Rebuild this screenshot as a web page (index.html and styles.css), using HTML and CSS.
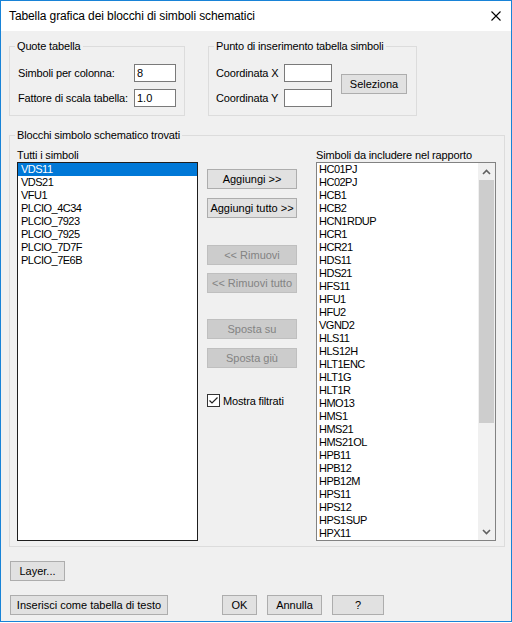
FILE: index.html
```html
<!DOCTYPE html>
<html lang="it">
<head>
	<meta charset="UTF-8">
	<title>Tabella grafica dei blocchi di simboli schematici</title>
	<link rel="stylesheet" href="styles.css">
</head>
<body>
	<div class="win">
		<div class="titlebar">
			<span class="title">Tabella grafica dei blocchi di simboli schematici</span>
			<svg class="close" width="10" height="10" viewBox="0 0 10 10"><path d="M0.5 0.5L9.5 9.5M9.5 0.5L0.5 9.5" stroke="#000" stroke-width="1.1" fill="none"/></svg>
		</div>
		<div class="main">
			<div class="toprow">
				<fieldset class="grp grp_quote">
					<legend>Quote tabella</legend>
					<div class="inner">
						<div class="frow"><label>Simboli per colonna:</label><input class="tb" value="8"></div>
						<div class="frow"><label>Fattore di scala tabella:</label><input class="tb" value="1.0"></div>
					</div>
				</fieldset>
				<fieldset class="grp grp_punto">
					<legend>Punto di inserimento tabella simboli</legend>
					<div class="inner">
						<div class="coords">
							<div class="frow"><label>Coordinata X</label><input class="tb"></div>
							<div class="frow"><label>Coordinata Y</label><input class="tb"></div>
						</div>
						<button class="btn sel">Seleziona</button>
					</div>
				</fieldset>
			</div>

			<fieldset class="grp grp_blocchi">
				<legend>Blocchi simbolo schematico trovati</legend>
				<div class="inner">
					<div class="col_l">
						<div class="cap">Tutti i simboli</div>
						<div class="lb lb_focus">
							<ul class="items">
								<li class="on">VDS11</li>
								<li>VDS21</li>
								<li>VFU1</li>
								<li>PLCIO_4C34</li>
								<li>PLCIO_7923</li>
								<li>PLCIO_7925</li>
								<li>PLCIO_7D7F</li>
								<li>PLCIO_7E6B</li>
							</ul>
						</div>
					</div>
					<div class="col_m">
						<button class="btn mid">Aggiungi &gt;&gt;</button>
						<button class="btn mid m9">Aggiungi tutto &gt;&gt;</button>
						<button class="btn mid m27" disabled>&lt;&lt; Rimuovi</button>
						<button class="btn mid m8" disabled>&lt;&lt; Rimuovi tutto</button>
						<button class="btn mid m26" disabled>Sposta su</button>
						<button class="btn mid m9" disabled>Sposta giù</button>
						<div class="chk">
							<svg width="13" height="13" viewBox="0 0 13 13"><rect x="0.5" y="0.5" width="12" height="12" fill="#fff" stroke="#333"/><path d="M2.5 6.5L5 9L10.5 3.5" stroke="#222" stroke-width="1.2" fill="none"/></svg>
							<span>Mostra filtrati</span>
						</div>
					</div>
					<div class="col_r">
						<div class="cap">Simboli da includere nel rapporto</div>
						<div class="lb">
							<ul class="items">
								<li>HC01PJ</li>
								<li>HC02PJ</li>
								<li>HCB1</li>
								<li>HCB2</li>
								<li>HCN1RDUP</li>
								<li>HCR1</li>
								<li>HCR21</li>
								<li>HDS11</li>
								<li>HDS21</li>
								<li>HFS11</li>
								<li>HFU1</li>
								<li>HFU2</li>
								<li>VGND2</li>
								<li>HLS11</li>
								<li>HLS12H</li>
								<li>HLT1ENC</li>
								<li>HLT1G</li>
								<li>HLT1R</li>
								<li>HMO13</li>
								<li>HMS1</li>
								<li>HMS21</li>
								<li>HMS21OL</li>
								<li>HPB11</li>
								<li>HPB12</li>
								<li>HPB12M</li>
								<li>HPS11</li>
								<li>HPS12</li>
								<li>HPS1SUP</li>
								<li>HPX11</li>
							</ul>
							<div class="sb">
								<div class="sb_btn"><svg width="9" height="6" viewBox="0 0 9 6"><path d="M1 5L4.5 1.5L8 5" stroke="#606060" stroke-width="1.6" fill="none"/></svg></div>
								<div class="sb_thumb"></div>
								<div class="sb_track"></div>
								<div class="sb_btn"><svg width="9" height="6" viewBox="0 0 9 6"><path d="M1 1L4.5 4.5L8 1" stroke="#606060" stroke-width="1.6" fill="none"/></svg></div>
							</div>
						</div>
					</div>
				</div>
			</fieldset>

			<button class="btn layer">Layer...</button>
			<div class="bottom">
				<button class="btn ins">Inserisci come tabella di testo</button>
				<button class="btn ok">OK</button>
				<button class="btn annulla">Annulla</button>
				<button class="btn help">?</button>
			</div>
		</div>
	</div>
</body>
</html>
```

FILE: styles.css
```css
*{margin:0;padding:0;box-sizing:border-box;}
ul{list-style:none;}
body{background:#fff;font-family:"Liberation Sans",Arial,sans-serif;font-size:11px;color:#000;letter-spacing:-0.15px;}
.win{width:512px;height:622px;border:1px solid #1883d7;background:#f0f0f0;display:flex;flex-direction:column;}
.titlebar{height:30px;background:#fff;display:flex;align-items:center;justify-content:space-between;padding:0 10px 0 8px;}
.title{font-size:12px;letter-spacing:-0.1px;}
.main{padding:9px 0 0 8px;}

.toprow{display:flex;gap:23px;}
.grp{border:1px solid #dcdcdc;min-width:0;}
.grp legend{margin-left:5px;padding:0 2px;line-height:13px;}
.grp_quote{width:176px;}
.grp_punto{width:209px;}
.grp_quote .inner{padding:11px 8px 8px 8px;}
.grp_punto .inner{padding:11px 0 8px 7px;display:flex;align-items:flex-start;}
.frow{display:flex;align-items:center;height:18px;}
.frow+.frow{margin-top:7px;}
.grp_quote label{width:116px;}
.grp_punto label{width:68px;}
.tb{height:18px;border:1px solid #7a7a7a;background:#fff;font:inherit;padding:0 2px;outline:none;}
.grp_quote .tb{width:42px;}
.grp_punto .tb{width:48px;}

.btn{height:20px;background:#e1e1e1;border:1px solid #adadad;font:inherit;color:#000;display:block;}
.btn:disabled{background:#cccccc;border-color:#bfbfbf;color:#838383;}
.sel{width:66px;margin:10px 0 0 9px;}

.grp_blocchi{width:496px;margin-top:13px;}
.grp_blocchi .inner{display:flex;padding:7px 8px 5px 7px;}
.cap{height:13px;line-height:13px;white-space:nowrap;}
.col_l{width:181px;}
.col_m{width:118px;padding:20px 0 0 9px;}
.col_r{width:180px;}
.lb{height:379px;border:1px solid #828282;background:#fff;display:flex;}
.lb_focus{border-color:#1e1e1e;}
.items{flex:1;}
.items li{height:13px;line-height:13px;padding-left:3px;letter-spacing:-0.5px;white-space:nowrap;}
.items .on{background:#0078d7;color:#fff;}
.col_r .items li{padding-left:2px;}
.sb{width:17px;display:flex;flex-direction:column;background:#f0f0f0;}
.sb_btn{height:17px;display:flex;align-items:center;justify-content:center;}
.sb_thumb{height:243px;margin:0 1px;background:#cdcdcd;}
.sb_track{flex:1;}

.mid{width:90px;}
.m8{margin-top:8px;}
.m9{margin-top:9px;}
.m26{margin-top:26px;}
.m27{margin-top:27px;}
.chk{display:flex;align-items:center;gap:3px;margin-top:26px;height:13px;}
.chk svg{display:block;}

.layer{width:55px;margin:14px 0 0 1px;}
.bottom{display:flex;margin:14px 0 0 1px;}
.ins{width:158px;}
.ok{width:35px;margin-left:54px;}
.annulla{width:55px;margin-left:10px;}
.help{width:52px;margin-left:10px;}
```
